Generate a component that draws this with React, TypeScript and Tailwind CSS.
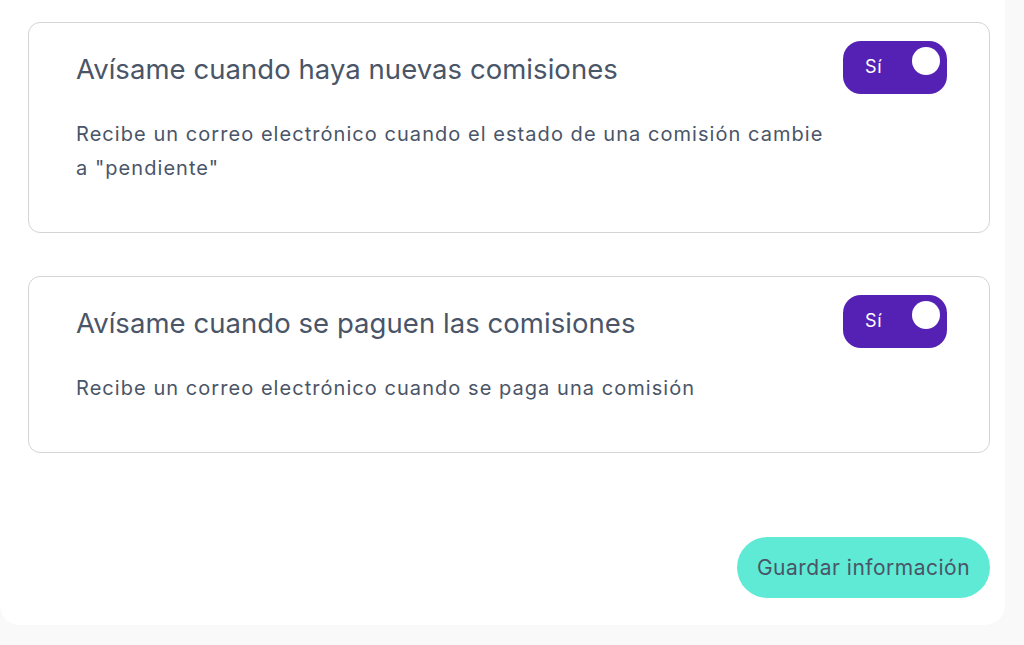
const font = { fontFamily: "Inter, 'Noto Sans', sans-serif" };

type RowProps = { title: string; description: string };

const Toggle = () => (
  <div className="relative h-[53px] w-[104px] shrink-0 rounded-[18px] bg-[#5521b5]">
    <span className="absolute left-[22px] top-[14px] text-[18px] leading-[24px] tracking-[0.8px] text-white">Sí</span>
    <span className="absolute right-[7px] top-[6px] h-[28px] w-[28px] rounded-full bg-white" />
  </div>
);

const NotificationCard = ({ title, description }: RowProps) => (
  <div className="flex items-start justify-between gap-4 rounded-[12px] border border-[#d4d4d8] pb-[47px] pl-[47px] pr-[42px] pt-[18px]">
    <div className="max-w-[770px] pt-[9px]">
      <h3 className="text-[27.5px] leading-[39px] tracking-[0.05px] text-[#4a5568]">{title}</h3>
      <p className="mt-[28px] text-[20px] leading-[34px] tracking-[1.05px] text-[#4a5568]">{description}</p>
    </div>
    <Toggle />
  </div>
);

export default function App() {
  return (
    <div className="min-h-screen bg-[#f9f9f9]" style={font}>
      <div className="w-[1005px] rounded-b-[20px] bg-white pb-[27px] pl-[28px] pr-[15px] pt-[22px]">
        <div className="flex flex-col gap-[43px]">
          <NotificationCard
            title="Avísame cuando haya nuevas comisiones"
            description={'Recibe un correo electrónico cuando el estado de una comisión cambie a "pendiente"'}
          />
          <NotificationCard
            title="Avísame cuando se paguen las comisiones"
            description="Recibe un correo electrónico cuando se paga una comisión"
          />
        </div>
        <div className="mt-[84px] flex justify-end">
          <button className="h-[61px] w-[253px] rounded-full bg-[#5eead4] text-[21px] tracking-[0.5px] text-[#4a5568]">
            Guardar información
          </button>
        </div>
      </div>
    </div>
  );
}
